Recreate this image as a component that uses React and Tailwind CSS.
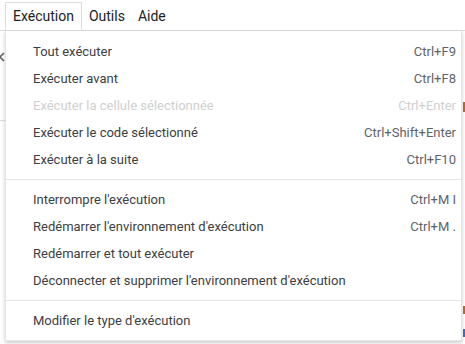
import React from 'react';

const groups = [
  [
    { label: 'Tout exécuter', key: 'Ctrl+F9' },
    { label: 'Exécuter avant', key: 'Ctrl+F8' },
    { label: 'Exécuter la cellule sélectionnée', key: 'Ctrl+Enter', disabled: true },
    { label: 'Exécuter le code sélectionné', key: 'Ctrl+Shift+Enter' },
    { label: 'Exécuter à la suite', key: 'Ctrl+F10' },
  ],
  [
    { label: "Interrompre l'exécution", key: 'Ctrl+M I' },
    { label: "Redémarrer l'environnement d'exécution", key: 'Ctrl+M .' },
    { label: 'Redémarrer et tout exécuter', key: '' },
    { label: "Déconnecter et supprimer l'environnement d'exécution", key: '' },
  ],
  [{ label: "Modifier le type d'exécution", key: '' }],
];

export default function App() {
  return (
    <div
      className="relative w-[465px] h-[344px] overflow-hidden bg-white text-[#3c4043]"
      style={{ fontFamily: 'Roboto, "Noto Sans", sans-serif' }}
    >
      {/* menu bar */}
      <div className="flex items-end h-[31px] border-b border-[#dadce0] pl-[5px] text-[14px]">
        <div className="relative z-20 h-[28px] px-[7px] flex items-center bg-white border border-b-0 border-[#dadce0] text-[#202124]">
          Exécution
        </div>
        <div className="h-[28px] px-[7px] flex items-center text-[#202124]">Outils</div>
        <div className="h-[28px] px-[6px] flex items-center text-[#202124]">Aide</div>
      </div>

      {/* bits of the page behind the menu */}
      <svg className="absolute left-0 top-[52px]" width="5" height="10" viewBox="0 0 5 10">
        <path d="M4 1 L0 5 L4 9" fill="none" stroke="#5f6368" strokeWidth="1.6" />
      </svg>
      <div className="absolute left-0 top-[120px] w-[5px] h-px bg-[#dadce0]" />
      <div className="absolute right-0 top-[102px] w-[2px] h-[10px] bg-[#c5691a]" />
      <div className="absolute right-0 top-[306px] w-[2px] h-[8px] bg-[#c5691a]" />
      <div className="absolute right-0 top-[329px] w-[2px] h-[8px] bg-[#3b6fd1]" />

      {/* dropdown */}
      <div className="absolute z-10 left-[5px] top-[31px] w-[457px] pt-px bg-white shadow-[0_2px_4px_rgba(0,0,0,0.2)] border-x border-[#e5e5e5]">
        {groups.map((g, gi) => (
          <div key={gi} className="py-[6px] border-b border-[#e6e6e6]">
            {g.map((it) => (
              <div
                key={it.label}
                className={`flex items-center justify-between h-[27px] pl-[27px] pr-[5px] text-[13px] ${
                  it.disabled ? 'text-[#d0d0d0]' : 'text-[#3c4043]'
                }`}
              >
                <span>{it.label}</span>
                <span className={it.disabled ? 'text-[#d0d0d0]' : 'text-[#5f6368]'}>{it.key}</span>
              </div>
            ))}
          </div>
        ))}
      </div>
    </div>
  );
}
